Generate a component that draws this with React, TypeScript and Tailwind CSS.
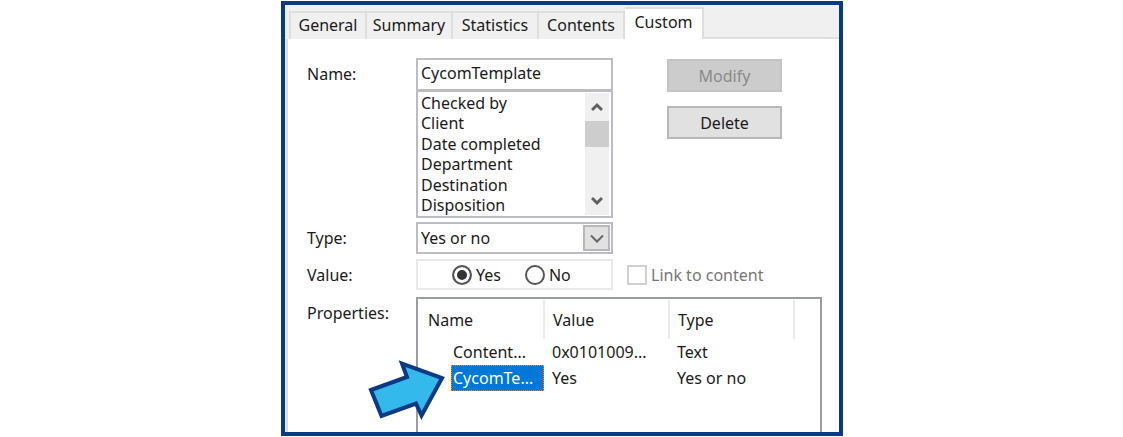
import { useState } from "react";

const tabs = ["General", "Summary", "Statistics", "Contents"];

const names = [
  "Checked by",
  "Client",
  "Date completed",
  "Department",
  "Destination",
  "Disposition",
];

function TabStrip() {
  return (
    <div className="flex items-end bg-[#f0f0f0] pt-0.5 pl-1">
      {tabs.map((tab) => (
        <button
          key={tab}
          type="button"
          className="h-7 min-w-0 flex-[0_1_86px] border-t-2 border-r-2 border-[#dedede] pb-0.5 text-center first:flex-[0_1_78px] first:border-l-2"
        >
          {tab}
        </button>
      ))}
      <button
        type="button"
        className="h-8 flex-[0_1_79px] border-t-2 border-r-2 border-[#dedede] bg-white pb-1 text-center"
      >
        Custom
      </button>
      <div className="h-8 flex-1 border-b-2 border-[#dedede]"></div>
    </div>
  );
}

function NameList() {
  return (
    <div className="flex h-32 justify-between border-2 border-[#bcbdc4] py-px pr-0.5 pl-px">
      <ul role="listbox" aria-label="Names" className="flex flex-col justify-between pl-0.5">
        {names.map((name) => (
          <li key={name} role="option" aria-selected={false} className="leading-5">
            {name}
          </li>
        ))}
      </ul>
      <div className="flex w-6 flex-col bg-[#f0f0f0]">
        <button type="button" aria-label="Scroll up" className="flex h-7 items-center justify-center">
          <svg width="12" height="10" viewBox="0 0 12 10">
            <path d="M1 8 6 3 11 8" fill="none" stroke="#606060" strokeWidth="3" />
          </svg>
        </button>
        <div className="h-[26px] bg-[#cdcdcd]"></div>
        <div className="flex-1"></div>
        <button type="button" aria-label="Scroll down" className="flex h-7 items-center justify-center">
          <svg width="12" height="10" viewBox="0 0 12 10">
            <path d="M1 2 6 7 11 2" fill="none" stroke="#606060" strokeWidth="3" />
          </svg>
        </button>
      </div>
    </div>
  );
}

function PropertiesTable() {
  return (
    <div className="relative min-h-[135px] border-2 border-b-0 border-[#9a9da6] pt-px">
      <table className="w-full table-fixed text-left" aria-labelledby="properties-label">
        <colgroup>
          <col className="w-[126px]" />
          <col className="w-[125px]" />
          <col className="w-[125px]" />
          <col />
        </colgroup>
        <thead>
          <tr className="h-[39px]">
            <th className="border-r-2 border-[#ebebeb] pl-2.5 font-normal">Name</th>
            <th className="border-r-2 border-[#ebebeb] pl-2 font-normal">Value</th>
            <th className="border-r-2 border-[#ebebeb] pl-2 font-normal">Type</th>
            <td></td>
          </tr>
        </thead>
        <tbody>
          <tr className="h-[26px]">
            <td className="pl-[35px]">Content...</td>
            <td className="pl-2">0x0101009...</td>
            <td className="pl-2">Text</td>
            <td></td>
          </tr>
          <tr className="h-[26px]">
            <td className="pl-[33px]">
              <div className="h-[26px] border border-dotted border-[#e08a3c] bg-[#0078d7] pl-px leading-6 text-white">
                CycomTe...
              </div>
            </td>
            <td className="pl-2">Yes</td>
            <td className="pl-2">Yes or no</td>
            <td></td>
          </tr>
        </tbody>
      </table>
      {/* Arrow pointing at the selected row */}
      <svg className="absolute top-[59px] -left-[52px]" width="84" height="68" viewBox="366 358 84 68">
        <path
          d="M371 390 407 377 402 363.500 442 378 421.500 415.500 416 403.500 381.500 416Z"
          fill="#33b9ec"
          stroke="#0b3a84"
          strokeWidth="4"
        />
      </svg>
    </div>
  );
}

export default function App() {
  const [name, setName] = useState("CycomTemplate");
  const [value, setValue] = useState("yes");

  return (
    <main className="bg-white pt-px pl-px font-['Noto_Sans',sans-serif] text-base text-[#1a1a1a]">
      <div className="mx-auto max-w-[562px] border-4 border-[#0b3a84] bg-[#f0f0f0]">
        <TabStrip />
        <form className="ml-px border-l-2 border-[#dedede] bg-white pt-[19px] pr-[17px] pl-[19px]">
          <div className="grid grid-cols-[109px_197px_1fr]">
            <label htmlFor="name" className="pt-1 leading-6">
              Name:
            </label>
            <div className="flex flex-col">
              <input
                id="name"
                value={name}
                onChange={(e) => setName(e.target.value)}
                className="h-8 w-full border-2 border-b border-[#bcbdc4] bg-white px-[3px] pb-1 outline-none"
              />
              <NameList />
            </div>
            <div className="flex flex-col gap-3.5 pl-[54px]">
              <button
                type="button"
                disabled
                className="mt-px h-[33px] w-[115px] border-2 border-[#c4c4c4] bg-[#cccccc] leading-6 text-[#8a8a8a]"
              >
                Modify
              </button>
              <button
                type="button"
                className="h-[33px] w-[115px] border-2 border-[#b8b8b8] bg-[#e1e1e1] leading-6"
              >
                Delete
              </button>
            </div>
          </div>

          <div className="mt-1 grid grid-cols-[109px_197px_1fr] items-center">
            <label htmlFor="type">Type:</label>
            <div className="flex h-8 border-2 border-[#bcbdc4] p-px">
              <select id="type" className="min-w-0 flex-1 appearance-none bg-white pl-0.5 outline-none">
                <option>Yes or no</option>
              </select>
              <span className="flex w-[27px] items-center justify-center border-2 border-[#b8b8b8] bg-[#e1e1e1]">
                <svg width="14" height="9" viewBox="0 0 14 9">
                  <path d="M1 1.500 7 7.500 13 1.500" fill="none" stroke="#666" strokeWidth="2" />
                </svg>
              </span>
            </div>
          </div>

          <div className="mt-[5px] grid grid-cols-[109px_197px_1fr] items-center">
            <span id="value-label">Value:</span>
            <div
              role="radiogroup"
              aria-labelledby="value-label"
              className="flex h-[31px] items-center gap-6 border-2 border-[#e8e8e8] pl-[34px]"
            >
              {["Yes", "No"].map((option) => (
                <label key={option} className="flex items-center gap-1">
                  <input
                    type="radio"
                    name="value"
                    checked={value === option.toLowerCase()}
                    onChange={() => setValue(option.toLowerCase())}
                    className="size-5 appearance-none rounded-full border-2 border-[#555] bg-white checked:bg-[#333] checked:shadow-[inset_0_0_0_3px_white]"
                  />
                  {option}
                </label>
              ))}
            </div>
            <label className="flex items-center gap-1 pl-3.5 text-[#777]">
              <input
                type="checkbox"
                disabled
                className="size-5 appearance-none border-2 border-[#d0d0d0] bg-white"
              />
              Link to content
            </label>
          </div>

          <div className="mt-[7px] grid grid-cols-[109px_1fr]">
            <span id="properties-label" className="pt-1">
              Properties:
            </span>
            <PropertiesTable />
          </div>
        </form>
      </div>
    </main>
  );
}
